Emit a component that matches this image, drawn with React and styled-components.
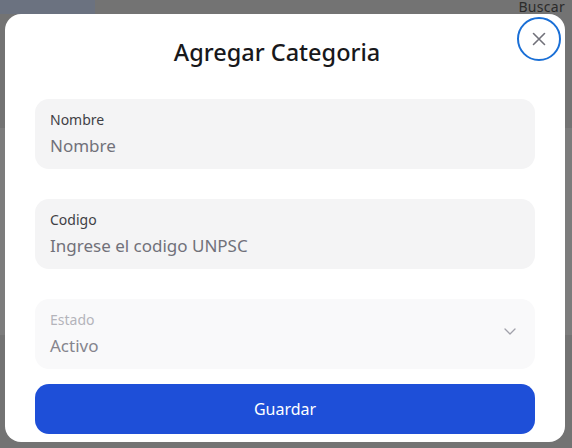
import React from "react";
import styled, { createGlobalStyle } from "styled-components";

const GlobalStyle = createGlobalStyle`
  html, body { margin: 0; padding: 0; }
  body {
    width: 572px;
    height: 448px;
    overflow: hidden;
    font-family: "Noto Sans", "Open Sans", sans-serif;
  }
`;

// pagina de fondo (ya atenuada por el overlay)
const Page = styled.div`
  width: 572px;
  height: 448px;
  position: relative;
  display: flex;
  flex-direction: column;
  background: #737373;
`;

const TopBar = styled.div`
  height: 128px;
  display: flex;
  justify-content: space-between;
  align-items: flex-start;
`;

const Brand = styled.div`
  width: 95px;
  height: 14px;
  background: #6b7280;
`;

const SearchLabel = styled.div`
  margin-right: 7px;
  font-size: 14px;
  line-height: 13px;
  letter-spacing: 0.3px;
  color: #2b2b2b;
`;

const TableArea = styled.div`
  height: 207px;
  background: #7c7c7c;
`;

const Overlay = styled.div`
  position: absolute;
  inset: 0;
  display: flex;
  align-items: flex-start;
  padding: 14px 0 0 5px;
`;

const Modal = styled.section`
  position: relative;
  width: 560px;
  height: 428px;
  background: #ffffff;
  border-radius: 16px;
  box-sizing: border-box;
  padding: 22px 30px 0 30px;
  display: flex;
  flex-direction: column;
  overflow: hidden;
`;

const Title = styled.h2`
  margin: 0;
  padding-right: 16px;
  text-align: center;
  font-size: 23.5px;
  line-height: 32px;
  font-weight: 500;
  color: #18181b;
`;

const CloseButton = styled.button`
  position: absolute;
  top: 3px;
  right: 4px;
  width: 44px;
  height: 44px;
  box-sizing: border-box;
  border-radius: 50%;
  border: 2px solid #1a6fd6;
  background: transparent;
  display: flex;
  align-items: center;
  justify-content: center;
  padding: 0;
  color: #71717a;
`;

const Form = styled.div`
  margin-top: 31px;
  display: flex;
  flex-direction: column;
`;

const Field = styled.div`
  height: 70px;
  box-sizing: border-box;
  border-radius: 14px;
  background: ${(p) => (p.$disabled ? "#f9f9fa" : "#f4f4f5")};
  padding: 0 15px;
  margin-bottom: ${(p) => p.$gap}px;
  display: flex;
  align-items: center;
  justify-content: space-between;
`;

const FieldText = styled.div`
  display: flex;
  flex-direction: column;
  gap: 4px;
  margin-top: 1px;
`;

const Label = styled.span`
  font-size: 14px;
  line-height: 18px;
  color: ${(p) => (p.$disabled ? "#b4b4bb" : "#3f3f46")};
`;

const Value = styled.span`
  font-size: 17px;
  line-height: 26px;
  color: ${(p) => (p.$disabled ? "#85858d" : "#71717a")};
`;

const Chevron = styled.span`
  margin-right: 4px;
  margin-top: -6px;
  color: #a1a1aa;
  display: flex;
`;

const SaveButton = styled.button`
  height: 50px;
  border: none;
  border-radius: 14px;
  background: #1e4fd8;
  color: #ffffff;
  font-family: inherit;
  font-size: 16px;
`;

function App() {
  return (
    <>
      <GlobalStyle />
      <Page>
        <TopBar>
          <Brand />
          <SearchLabel>Buscar</SearchLabel>
        </TopBar>
        <TableArea />
        <Overlay>
          <Modal>
            <Title>Agregar Categoria</Title>
            <CloseButton aria-label="Cerrar">
              <svg width="14" height="14" viewBox="0 0 14 14" fill="none" stroke="currentColor" strokeWidth="1.6" strokeLinecap="round">
                <path d="M1.5 1.5 L12.5 12.5 M12.5 1.5 L1.5 12.5" />
              </svg>
            </CloseButton>
            <Form>
              <Field $gap={30}>
                <FieldText>
                  <Label>Nombre</Label>
                  <Value>Nombre</Value>
                </FieldText>
              </Field>
              <Field $gap={30}>
                <FieldText>
                  <Label>Codigo</Label>
                  <Value>Ingrese el codigo UNPSC</Value>
                </FieldText>
              </Field>
              <Field $gap={15} $disabled>
                <FieldText>
                  <Label $disabled>Estado</Label>
                  <Value $disabled>Activo</Value>
                </FieldText>
                <Chevron>
                  <svg width="12" height="7" viewBox="0 0 12 7" fill="none" stroke="currentColor" strokeWidth="1.3" strokeLinecap="round" strokeLinejoin="round">
                    <path d="M1 1 L6 6 L11 1" />
                  </svg>
                </Chevron>
              </Field>
              <SaveButton>Guardar</SaveButton>
            </Form>
          </Modal>
        </Overlay>
      </Page>
    </>
  );
}

export default App;
